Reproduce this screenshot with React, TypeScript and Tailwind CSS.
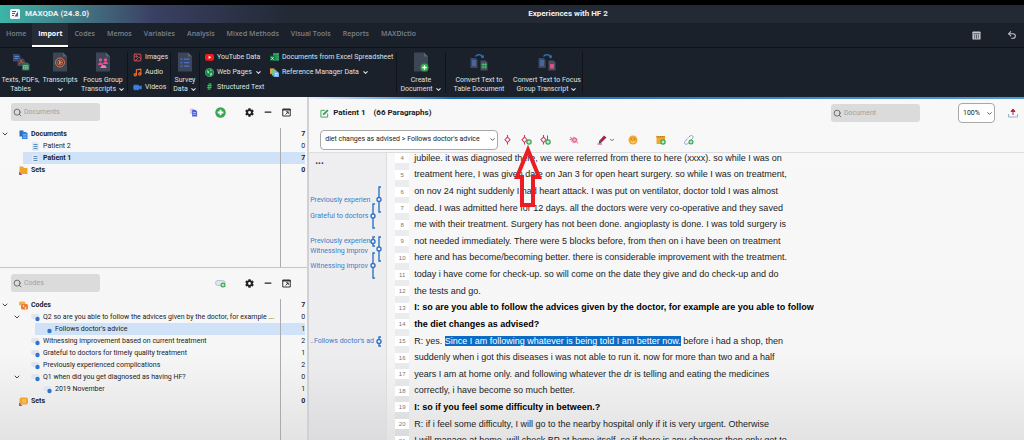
import type { ReactNode } from "react";
import { ChevronDown, Image, Minus, Music, Search, Undo2, Video } from "lucide-react";
import { FaCog } from "react-icons/fa";

const tabs = [
    "Home",
    "Import",
    "Codes",
    "Memos",
    "Variables",
    "Analysis",
    "Mixed Methods",
    "Visual Tools",
    "Reports",
    "MAXDictio",
];

interface TreeItem {
    label: string;
    count: number;
    depth: number;
    icon: ReactNode;
    open?: boolean;
    bold?: boolean;
    selected?: boolean;
}

interface Line {
    n: number;
    text: string;
    bold?: boolean;
    marked?: string;
    rest?: string;
}

const lines: Line[] = [
    { n: 4, text: "jubilee. it was diagnosed there, we were referred from there to here (xxxx). so while I was on" },
    { n: 5, text: "treatment here, I was given date on Jan 3 for open heart surgery. so while I was on treatment," },
    { n: 6, text: "on nov 24 night suddenly I had heart attack. I was put on ventilator, doctor told I was almost" },
    { n: 7, text: "dead. I was admitted here for 12 days. all the doctors were very co-operative and they saved" },
    { n: 8, text: "me with their treatment. Surgery has not been done. angioplasty is done. I was told surgery is" },
    { n: 9, text: "not needed immediately. There were 5 blocks before, from then on i have been on treatment" },
    { n: 10, text: "here and has become/becoming better. there is considerable improvement with the treatment." },
    { n: 11, text: "today i have come for check-up. so will come on the date they give and do check-up and do" },
    { n: 12, text: "the tests and go." },
    { n: 13, text: "I: so are you able to follow the advices given by the doctor, for example are you able to follow", bold: true },
    { n: 14, text: "the diet changes as advised?", bold: true },
    { n: 15, text: "R: yes. ", marked: "Since I am following whatever is being told I am better now.", rest: " before i had a shop, then" },
    { n: 16, text: "suddenly when i got this diseases i was not able to run it. now for more than two and a half" },
    { n: 17, text: "years I am at home only. and following whatever the dr is telling and eating the medicines" },
    { n: 18, text: "correctly, i have become so much better." },
    { n: 19, text: "I: so if you feel some difficulty in between.?", bold: true },
    { n: 20, text: "R: if i feel some difficulty, I will go to the nearby hospital only if it is very urgent. Otherwise" },
    { n: 21, text: "I will manage at home, will check BP at home itself, so if there is any changes then only get to" },
];

const DocsIcon = () => (
    <svg viewBox="0 0 18 18" className="size-[9px] shrink-0">
        <path d="M1 1h8v12H1z" fill="#2f6fae" />
        <path d="M6 4h8l3 3v11H6z" fill="#2f7fe0" />
        <path d="M8 9h7M8 12h7M8 15h7" stroke="#a9cdf7" strokeWidth="1.2" />
    </svg>
);

const PageIcon = () => (
    <svg viewBox="0 0 18 18" className="size-[9px] shrink-0">
        <path d="M2 0h10l4 4v14H2z" fill="#e3e8ee" />
        <path d="M5 5h8M5 9h8M5 13h8" stroke="#4a84bd" strokeWidth="1.8" />
    </svg>
);

const FolderIcon = () => (
    <svg viewBox="0 0 18 18" className="size-[9px] shrink-0">
        <path d="M1 1h7l2 3h7v12H1z" fill="#eda52c" />
        <path d="M0 11l7 7H0z" fill="#c7408c" />
    </svg>
);

const CodesIcon = () => (
    <svg viewBox="0 0 18 18" className="size-[9px] shrink-0">
        <rect x="0" y="1" width="13" height="8" rx="3" fill="#f3b04a" />
        <rect x="4" y="6" width="14" height="11" rx="3" fill="#ee7b2f" />
        <circle cx="9" cy="10" r="1.6" fill="#fff" />
        <circle cx="13" cy="14" r="1.6" fill="#fff" />
    </svg>
);

const CodeIcon = ({ tag = true }: { tag?: boolean }) => (
    <svg viewBox="0 0 18 18" className="size-[9px] shrink-0">
        {tag && <rect x="0" y="2" width="17" height="10" rx="5" fill="#dfe6ef" />}
        <circle cx="13" cy="12" r="4.4" fill="#2f74d0" />
    </svg>
);

const CodeSetIcon = () => (
    <svg viewBox="0 0 18 18" className="size-[9px] shrink-0">
        <rect x="1" y="1" width="17" height="14" rx="4" fill="#eda52c" />
        <path d="M8 4v8M12 4v8" stroke="#fbe0a8" strokeWidth="1.5" />
        <path d="M0 11l7 7H0z" fill="#c7408c" />
    </svg>
);

const documents: TreeItem[] = [
    { label: "Documents", count: 7, depth: 0, icon: <DocsIcon />, open: true, bold: true },
    { label: "Patient 2", count: 0, depth: 1, icon: <PageIcon /> },
    { label: "Patient 1", count: 7, depth: 1, icon: <PageIcon />, bold: true, selected: true },
    { label: "Sets", count: 0, depth: 0, icon: <FolderIcon />, bold: true },
];

const codes: TreeItem[] = [
    { label: "Codes", count: 7, depth: 0, icon: <CodesIcon />, open: true, bold: true },
    { label: "Q2 so are you able to follow the advices given by the doctor, for example ...", count: 0, depth: 1, icon: <CodeIcon />, open: true },
    { label: "Follows doctor's advice", count: 1, depth: 2, icon: <CodeIcon tag={false} />, selected: true },
    { label: "Witnessing improvement based on current treatment", count: 2, depth: 1, icon: <CodeIcon /> },
    { label: "Grateful to doctors for timely quality treatment", count: 1, depth: 1, icon: <CodeIcon /> },
    { label: "Previously experienced complications", count: 2, depth: 1, icon: <CodeIcon /> },
    { label: "Q1 when did you get diagnosed as having HF?", count: 0, depth: 1, icon: <CodeIcon />, open: true },
    { label: "2019 November", count: 1, depth: 2, icon: <CodeIcon /> },
    { label: "Sets", count: 0, depth: 0, icon: <CodeSetIcon />, bold: true },
];

const indent = ["", "pl-3", "pl-6"];

const Tree = ({ items }: { items: TreeItem[] }) => (
    <ul className="flex min-h-0 flex-1 flex-col pr-0.5 text-[7px] leading-3 text-[#1c1c1c]">
        {items.map((item) => (
            <li key={item.label} className={`flex h-3 shrink-0 items-stretch ${indent[item.depth]}`}>
                <span className="flex w-[11px] shrink-0 items-center pl-px">
                    {item.open && <ChevronDown className="size-2 text-[#444]" strokeWidth={3} />}
                </span>
                <div className={`flex min-w-0 flex-1 items-center gap-[3px] pl-2 ${item.selected ? "bg-[#cfe2f8]" : ""}`}>
                    {item.icon}
                    <span className={`min-w-0 flex-1 truncate ${item.bold ? "font-bold" : ""}`}>{item.label}</span>
                    <span className={`-ml-[3px] w-[25px] border-l border-[#a9abae] text-right ${item.bold ? "font-bold" : ""}`}>
                        {item.count}
                    </span>
                </div>
            </li>
        ))}
        <li aria-hidden="true" className="flex flex-1 justify-end">
            <span className="w-[25px] border-l border-[#a9abae]" />
        </li>
    </ul>
);

const SearchBox = ({ label }: { label: string }) => (
    <label className="flex h-[18px] w-[89px] items-center gap-0.5 rounded-[3px] bg-[#dbdbdb] px-0.5">
        <Search className="size-[9px] shrink-0 text-[#666]" strokeWidth={2.5} />
        <input
            type="search"
            aria-label={label}
            placeholder={label}
            className="w-full min-w-0 bg-transparent text-[7px] text-[#333] outline-none placeholder:text-[#a0a0a0]"
        />
    </label>
);

const PopOutIcon = () => (
    <svg viewBox="0 0 18 18" className="size-[9px]">
        <path d="M1.5 2h15v14h-15z" fill="none" stroke="#333" strokeWidth="2" />
        <path d="M1 3.5h16" stroke="#333" strokeWidth="3" />
        <path d="M7 13l5-5M8 7.5h4.5V12" fill="none" stroke="#333" strokeWidth="1.8" />
    </svg>
);

const PlusBadge = ({ x, y, r }: { x: number; y: number; r: number }) => (
    <g>
        <circle cx={x} cy={y} r={r} fill="#35a84c" />
        <path d={`M${x - r * 0.55} ${y}h${r * 1.1}M${x} ${y - r * 0.55}v${r * 1.1}`} stroke="#fff" strokeWidth={r * 0.35} />
    </g>
);

const PanelHeader = ({ label, children }: { label: string; children: ReactNode }) => (
    <div className="flex shrink-0 items-center justify-between pl-[11px] pr-4">
        <SearchBox label={label} />
        <div className="flex items-center gap-[9px]">
            {children}
            <button aria-label="Settings" className="ml-1.5">
                <FaCog className="size-[9px] text-[#222]" />
            </button>
            <button aria-label="Minimize">
                <Minus className="size-2.5 text-[#222]" strokeWidth={3} />
            </button>
            <button aria-label="Undock">
                <PopOutIcon />
            </button>
        </div>
    </div>
);

const Separator = () => <div className="my-1 w-px shrink-0 bg-[#0f141b]" />;

interface BigButtonProps {
    width: string;
    icon: ReactNode;
    first: string;
    second?: string;
    menu?: boolean;
}

const BigButton = ({ width, icon, first, second, menu }: BigButtonProps) => (
    <button className={`flex shrink-0 flex-col items-center whitespace-nowrap pt-1 ${width}`}>
        <span className="flex h-5 items-center">{icon}</span>
        <span className="mt-1 leading-[9px]">{first}</span>
        <span className="flex h-[9px] items-center gap-0.5 leading-[9px]">
            {second}
            {menu && <ChevronDown className="size-[7px]" strokeWidth={3.5} />}
        </span>
    </button>
);

const SmallButton = ({ icon, label, menu }: { icon: ReactNode; label: string; menu?: boolean }) => (
    <button className="flex h-[15px] items-center gap-[3px] whitespace-nowrap">
        <span className="flex w-[9px] shrink-0 justify-center">{icon}</span>
        {label}
        {menu && <ChevronDown className="size-[7px]" strokeWidth={3.5} />}
    </button>
);

const RibbonPage = ({ children }: { children: ReactNode }) => (
    <svg viewBox="0 0 32 40" className="h-5 w-4">
        <path d="M2 1h20l8 8v30H2z" fill="#3d4656" />
        <path d="M22 1l8 8h-8z" fill="#596375" />
        {children}
    </svg>
);

const ConvertIcon = ({ target }: { target: ReactNode }) => (
    <svg viewBox="0 0 36 36" className="size-[18px]">
        <path d="M11 7c3-5 11-5 14 0" fill="none" stroke="#2f78c4" strokeWidth="2.6" />
        <path d="M28 4l-1 7-6-3z" fill="#2f78c4" />
        <path d="M1 10h10l4 4v16H1z" fill="#3d4a62" />
        <path d="M4 16h8M4 20h8M4 24h8" stroke="#4e83d6" strokeWidth="2" />
        <path d="M21 15h10l4 4v16H21z" fill="#465062" />
        {target}
    </svg>
);

const Ribbon = () => (
    <div className="flex h-[50px] shrink-0 border-t border-[#0c1118] bg-[#1b212b] text-[7px] text-[#dfe1e4]">
        <BigButton
            width="w-[41px]"
            first="Texts, PDFs,"
            second="Tables"
            icon={
                <svg viewBox="0 0 36 36" className="size-[18px]">
                    <path d="M2 2h11l4 4v11H2z" fill="#3c4b68" />
                    <path d="M5 7h9M5 11h9" stroke="#5487cf" strokeWidth="2" />
                    <path d="M11 11h11l4 4v11H11z" fill="#4a4556" />
                    <path d="M14 22c5-2 6-8 4-8s0 6 6 6" fill="none" stroke="#d9534a" strokeWidth="1.8" />
                    <path d="M20 19h11l4 4v12H20z" fill="#39665a" />
                    <path d="M23 25h9v7h-9zM23 28.5h9M27.500 25v7" fill="none" stroke="#5fd382" strokeWidth="1.8" />
                </svg>
            }
        />
        <BigButton
            width="w-[38px]"
            first="Transcripts"
            menu
            icon={
                <RibbonPage>
                    <circle cx="16" cy="21" r="9" fill="none" stroke="#ee6f3a" strokeWidth="2" />
                    <circle cx="16" cy="21" r="5" fill="none" stroke="#ee6f3a" strokeWidth="1.5" />
                    <path d="M14 17l6 4-6 4z" fill="#f08a4a" />
                </RibbonPage>
            }
        />
        <BigButton
            width="w-[48px]"
            first="Focus Group"
            second="Transcripts"
            menu
            icon={
                <RibbonPage>
                    <circle cx="11" cy="16" r="3.500" fill="#e2528f" />
                    <circle cx="21" cy="16" r="3.500" fill="#e2528f" />
                    <path d="M6 26c0-7 10-7 10 0zM16 24c0-6 10-6 10 0z" fill="#e2528f" />
                    <path d="M11 32c0-8 12-8 12 0z" fill="#f07fb0" />
                </RibbonPage>
            }
        />
        <Separator />
        <div className="flex w-[42px] shrink-0 flex-col pl-[5px] pt-0.5">
            <SmallButton icon={<Image className="size-[9px] text-[#e0505c]" strokeWidth={2.5} />} label="Images" />
            <SmallButton icon={<Music className="size-[9px] text-[#f0702c]" strokeWidth={3} />} label="Audio" />
            <SmallButton icon={<Video className="size-[9px] fill-[#3b82e0] text-[#3b82e0]" />} label="Videos" />
        </div>
        <Separator />
        <BigButton
            width="w-[28px]"
            first="Survey"
            second="Data"
            menu
            icon={
                <RibbonPage>
                    <path d="M7 14h4M14 14h11M7 21h4M14 21h11M7 28h4M14 28h11" stroke="#4f6fd8" strokeWidth="2.500" />
                </RibbonPage>
            }
        />
        <Separator />
        <div className="flex w-[70px] shrink-0 flex-col pl-[5px] pt-0.5">
            <SmallButton
                label="YouTube Data"
                icon={
                    <svg viewBox="0 0 20 16" className="w-[9px]">
                        <rect width="20" height="15" rx="4" fill="#ee1c1c" />
                        <path d="M8 4l6 3.500-6 3.500z" fill="#fff" />
                    </svg>
                }
            />
            <SmallButton
                label="Web Pages"
                menu
                icon={
                    <svg viewBox="0 0 20 20" className="w-[9px]">
                        <circle cx="10" cy="10" r="9" fill="#1e7a46" stroke="#4cc774" strokeWidth="1.500" />
                        <path d="M4 5l5 2 1 4-4 1zM11 12l5-2-1 6-4 1zM11 3l5 3-4 1z" fill="#8ce0a5" />
                    </svg>
                }
            />
            <SmallButton label="Structured Text" icon={<span className="text-[9px] font-bold text-[#3fc46a]">#</span>} />
        </div>
        <div className="flex w-[126px] shrink-0 flex-col pt-0.5">
            <SmallButton
                label="Documents from Excel Spreadsheet"
                icon={
                    <svg viewBox="0 0 20 20" className="w-[9px]">
                        <path d="M7 0h13v17H7z" fill="#2ea866" />
                        <path d="M13 0v17M7 6h13M7 11h13" stroke="#176a3d" strokeWidth="1" />
                        <path d="M0 6h11v11H0z" fill="#157a42" />
                        <path d="M3 9l5 6M8 9l-5 6" stroke="#fff" strokeWidth="1.500" />
                    </svg>
                }
            />
            <SmallButton
                label="Reference Manager Data"
                menu
                icon={
                    <svg viewBox="0 0 20 20" className="w-[9px]">
                        <path d="M0 1h10v12H0z" fill="#f2a23a" />
                        <path d="M4 4h10v13H4z" fill="#78c07e" />
                        <path d="M8 7h8l4 4v9H8z" fill="#78b3ea" />
                        <path d="M11 12h6M11 16h6" stroke="#fff" strokeWidth="1.500" />
                    </svg>
                }
            />
        </div>
        <Separator />
        <BigButton
            width="w-[48px]"
            first="Create"
            second="Document"
            menu
            icon={
                <RibbonPage>
                    <PlusBadge x={23} y={31} r={8} />
                </RibbonPage>
            }
        />
        <Separator />
        <BigButton
            width="w-[66px]"
            first="Convert Text to"
            second="Table Document"
            icon={<ConvertIcon target={<path d="M26 20v11M31 20v11M23 23h11M23 28h11" stroke="#45bb63" strokeWidth="2" />} />}
        />
        <BigButton
            width="w-[70px]"
            first="Convert Text to Focus"
            second="Group Transcript"
            menu
            icon={<ConvertIcon target={<path d="M24 22h8v9h-8z" fill="#d94f87" />} />}
        />
        <Separator />
    </div>
);

interface Stripe {
    label: string;
    labelTop: string;
    x: number;
    from: number;
    to: number;
}

// y positions are measured from the top of the coding column
const stripes: Stripe[] = [
    { label: "Previously experien", labelTop: "top-[42px]", x: 70, from: 34, to: 59 },
    { label: "Grateful to doctors", labelTop: "top-[58px]", x: 64, from: 51, to: 75 },
    { label: "Previously experien", labelTop: "top-[83px]", x: 64, from: 84, to: 93 },
    { label: "Witnessing improv", labelTop: "top-[93px]", x: 70, from: 84, to: 108 },
    { label: "Witnessing improv", labelTop: "top-[108px]", x: 64, from: 100, to: 125 },
    { label: "..Follows doctor's ad", labelTop: "top-[183px]", x: 70, from: 184, to: 193 },
];

const CodingColumn = () => (
    <div className="relative w-[78px] shrink-0 overflow-hidden border-r border-[#dcdde0] bg-[#8a90a0]/8">
        <span className="absolute left-1.5 top-[3px] text-[10px] font-bold leading-[10px] text-[#333]">...</span>
        {stripes.map((s) => (
            <span
                key={s.labelTop}
                className={`absolute left-px whitespace-nowrap text-[7px] leading-[10px] text-[#3d7cc4] ${s.labelTop}`}
            >
                {s.label}
            </span>
        ))}
        <svg className="absolute left-0 top-0 h-full w-full" aria-hidden="true">
            {stripes.map((s) => (
                <g key={s.labelTop} fill="none" stroke="#2f74c4" strokeWidth="1.400">
                    <path d={`M${s.x + 2} ${s.from}h-2V${s.to}h2`} />
                    <circle cx={s.x} cy={(s.from + s.to) / 2} r="2" fill="#f4f6fa" />
                </g>
            ))}
        </svg>
    </div>
);

const Diamond = ({ badge, bar }: { badge?: boolean; bar?: boolean }) => (
    <svg viewBox={badge ? "0 0 22 20" : "-4 0 22 20"} className="h-2.5 w-[11px]">
        <path d="M7 0v4M7 15v4M7 4l5 5.500-5 5.500-5-5.500z" fill="none" stroke="#d03565" strokeWidth="2.200" />
        {bar && <path d="M15 1v9" stroke="#d03565" strokeWidth="2" />}
        {badge && <PlusBadge x={16} y={14} r={5.5} />}
    </svg>
);

const CodingToolbar = () => (
    <div className="flex h-[26px] shrink-0 items-center border-b border-[#dcdde0] pl-[11px]">
        <label className="relative mr-1 flex w-[178px] items-center">
            <select
                aria-label="Code"
                className="h-5 w-full appearance-none rounded-[4px] border border-[#a8a8a8] bg-white pl-1 pr-3 text-[7px] text-[#222]"
            >
                <option>diet changes as advised &gt; Follows doctor's advice</option>
            </select>
            <ChevronDown className="pointer-events-none absolute right-0.5 size-[7px] text-[#444]" strokeWidth={3} />
        </label>
        <div className="flex items-center gap-2">
            <button aria-label="Code"><Diamond /></button>
            <button aria-label="Code with new code"><Diamond badge /></button>
            <button aria-label="Code in vivo"><Diamond badge bar /></button>
        </div>
        <button aria-label="Highlight coding" className="ml-[18px]">
            <svg viewBox="0 0 20 20" className="size-2.5">
                <path d="M2 8l7-5 8 4v8l-8 2-5-4z" fill="#f3b8cc" />
                <circle cx="11" cy="10" r="4" fill="none" stroke="#d94f82" strokeWidth="2" />
                <path d="M2 4l4 3M1 9h4M16 14l2 3" stroke="#d94f82" strokeWidth="1.500" />
            </svg>
        </button>
        <button aria-label="Highlighter colour" className="ml-[18px] flex items-center gap-0.5">
            <svg viewBox="0 0 20 20" className="size-2.5">
                <path d="M4 12L14 1l5 4-10 10z" fill="#a3264f" />
                <path d="M4 12l5 3-5 2z" fill="#333" />
                <path d="M1 18h9" stroke="#d03565" strokeWidth="2" />
            </svg>
            <ChevronDown className="size-1.5 text-[#555]" strokeWidth={3.5} />
        </button>
        <button aria-label="Emoticode" className="ml-[13px]">
            <svg viewBox="0 0 20 20" className="size-2.5">
                <circle cx="10" cy="10" r="9" fill="#f0a92e" />
                <circle cx="7" cy="8" r="1.300" fill="#b07818" />
                <circle cx="13" cy="8" r="1.300" fill="#b07818" />
                <path d="M6 12c2 4 6 4 8 0" fill="none" stroke="#fff0c8" strokeWidth="1.600" />
            </svg>
        </button>
        <button aria-label="New memo" className="ml-[18px]">
            <svg viewBox="0 0 20 20" className="size-2.5">
                <path d="M1 2h17v16H1z" fill="#f0a92e" />
                <path d="M1 3.500h17" stroke="#b87414" strokeWidth="3" strokeDasharray="2 1.500" />
                <PlusBadge x={14} y={14} r={5.5} />
            </svg>
        </button>
        <button aria-label="New link" className="ml-[18px]">
            <svg viewBox="0 0 20 20" className="size-2.5">
                <path d="M9 5l3-3c4-3 8 1 5 5l-4 4M11 14l-4 4c-4 2-8-2-5-5l5-6" fill="none" stroke="#7fa3cc" strokeWidth="2" />
                <PlusBadge x={14} y={14} r={5} />
            </svg>
        </button>
    </div>
);

const DocumentHeader = () => (
    <div className="flex h-7 shrink-0 items-center gap-1 pl-[11px] pr-1.5 text-[8px]">
        <svg viewBox="0 0 20 20" className="size-[9px]">
            <path d="M17 10v8H2V3h9" fill="none" stroke="#3a9b55" strokeWidth="2" />
            <path d="M6 14l1-4 9-9 3 3-9 9z" fill="#3a9b55" />
        </svg>
        <h1 className="font-bold text-[#1c1c1c]">
            Patient 1<span className="ml-2">(66 Paragraphs)</span>
        </h1>
        <div className="ml-auto flex items-center">
            <SearchBox label="Document" />
            <label className="relative ml-[38px] flex w-[37px] items-center">
                <select
                    aria-label="Zoom"
                    className="h-5 w-full appearance-none rounded-[4px] border border-[#a8a8a8] bg-white pl-1 text-[7px] text-[#222]"
                >
                    <option>100%</option>
                </select>
                <ChevronDown className="pointer-events-none absolute right-0.5 size-[7px] text-[#444]" strokeWidth={3} />
            </label>
            <button aria-label="Export" className="ml-[13px]">
                <svg viewBox="0 0 20 20" className="size-2.5">
                    <path d="M10 14V4M6 7l4-5 4 5z" fill="#b3263c" stroke="#b3263c" strokeWidth="2" />
                    <path d="M1 12v6h18v-6" fill="none" stroke="#8fa9c9" strokeWidth="1.800" />
                </svg>
            </button>
        </div>
    </div>
);

const App: React.FC = () => {
    return (
        <div className="flex h-screen flex-col overflow-hidden bg-black pt-[5px] font-['Roboto','Open_Sans',sans-serif]">
            <header className="flex h-[18px] shrink-0 items-center bg-linear-to-r from-[#3bb5a8] via-[#3a4063] via-15% to-[#232a36] to-28% text-[8px] font-bold text-[#eef0f2]">
                <div className="flex w-28 shrink-0 items-center gap-[5px] pl-2.5">
                    <svg viewBox="0 0 20 20" className="size-2.5">
                        <rect width="20" height="20" rx="3" fill="#f4f6fa" />
                        <path d="M4 5h8M4 9h6M4 13h4" stroke="#44608f" strokeWidth="2" />
                        <path d="M9 15l7-10v10z" fill="#44608f" />
                    </svg>
                    <span className="whitespace-nowrap">MAXQDA (24.8.0)</span>
                </div>
                <span className="flex-1 text-center">Experiences with HF 2</span>
            </header>

            <nav className="flex h-6 shrink-0 items-stretch bg-[#1b212b] font-['Open_Sans',sans-serif] text-[7px] font-semibold text-[#7d828b]">
                {tabs.map((tab) => (
                    <button
                        key={tab}
                        className={`whitespace-nowrap border-b-2 px-1.5 ${
                            tab === "Import" ? "border-white bg-[#262c36] font-bold text-white" : "border-transparent"
                        }`}
                    >
                        {tab}
                    </button>
                ))}
                <div className="ml-auto flex items-center gap-[26px] pr-[7px]">
                    <button aria-label="Table view">
                        <svg viewBox="0 0 20 20" className="size-[9px]">
                            <rect x="1" y="1" width="18" height="18" rx="2" fill="#c3c7cc" />
                            <path d="M3 6h14M6 8v9M10 8v9M14 8v9" stroke="#2a303a" strokeWidth="1.500" />
                        </svg>
                    </button>
                    <button aria-label="Undo">
                        <Undo2 className="size-2.5 text-[#c3c7cc]" strokeWidth={2.5} />
                    </button>
                </div>
            </nav>

            <Ribbon />

            <main className="flex min-h-0 flex-1 bg-linear-to-b from-[#f8f8f9] via-[#f6f6f7] via-75% to-[#e3e3e4]">
                <aside className="flex w-[30%] shrink-0 flex-col">
                    <section className="flex h-[171px] shrink-0 flex-col gap-[7px] border-b border-[#c4c5c8] pt-[6px]">
                        <PanelHeader label="Documents">
                            <button aria-label="Open documents">
                                <svg viewBox="0 0 20 20" className="size-[9px]">
                                    <path d="M2 1h8v12H2z" fill="#ecc3ea" />
                                    <path d="M7 4h7l4 4v11H7z" fill="#4a5fd8" />
                                    <path d="M9 10h7M9 14h7" stroke="#d6defa" strokeWidth="1.500" />
                                </svg>
                            </button>
                            <button aria-label="Add document" className="ml-2 mr-1">
                                <svg viewBox="0 0 20 20" className="size-[11px]">
                                    <PlusBadge x={10} y={10} r={9.5} />
                                </svg>
                            </button>
                        </PanelHeader>
                        <Tree items={documents} />
                    </section>
                    <section className="flex min-h-0 flex-1 flex-col gap-[7px] pt-[6px]">
                        <PanelHeader label="Codes">
                            <button aria-label="New code" className="mr-1">
                                <svg viewBox="0 0 22 18" className="h-[9px] w-[11px]">
                                    <rect x="1" y="3" width="19" height="10" rx="5" fill="#dfe6ef" stroke="#a9b5c4" strokeWidth="1.500" />
                                    <PlusBadge x={16} y={12} r={5} />
                                </svg>
                            </button>
                        </PanelHeader>
                        <Tree items={codes} />
                    </section>
                </aside>

                <section className="relative flex min-w-0 flex-1 flex-col border-l-2 border-[#d0d1d4]">
                    <div className="h-0.5 shrink-0 bg-linear-to-r from-[#e8f2fb] via-[#0f6cbd] via-20% to-[#4f9bd6]" />
                    <DocumentHeader />
                    <CodingToolbar />
                    <div className="flex min-h-0 flex-1 overflow-hidden">
                        <CodingColumn />
                        <ol className="-mb-[9px] -mt-[3px] ml-2 flex flex-1 flex-col font-['Liberation_Sans',Arial,sans-serif] text-[9px] text-[#222]">
                            {lines.map((line) => (
                                <li key={line.n} className="flex min-h-0 flex-1 items-stretch gap-[5px] whitespace-nowrap">
                                    <span className="flex w-3.5 shrink-0 items-center bg-[#8a90a0]/10">
                                        <span className="h-2.5 w-full bg-white text-center text-[6px] leading-[10px] text-[#777]">
                                            {line.n}
                                        </span>
                                    </span>
                                    <p className={`self-center leading-[11px] ${line.bold ? "font-bold text-black" : ""}`}>
                                        {line.text}
                                        {line.marked && <mark className="bg-[#0a6cc4] text-white">{line.marked}</mark>}
                                        {line.rest}
                                    </p>
                                </li>
                            ))}
                        </ol>
                    </div>
                    <svg
                        viewBox="0 0 28 64"
                        className="pointer-events-none absolute left-[205px] top-12 h-16 w-7"
                        aria-hidden="true"
                    >
                        <path d="M14 5L25 32H19V60H8V32H3z" fill="none" stroke="#ec1c24" strokeWidth="4" />
                    </svg>
                </section>
            </main>
        </div>
    );
};

export default App;
